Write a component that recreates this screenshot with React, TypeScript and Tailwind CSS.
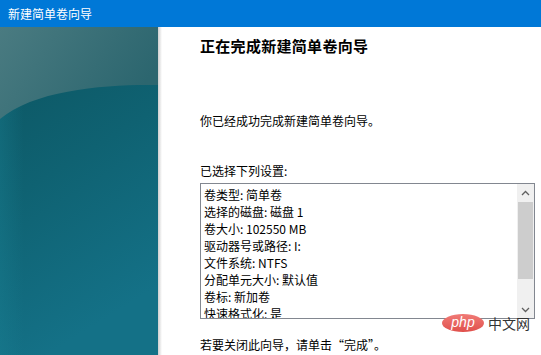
import React from 'react';

const settings = [
  '卷类型: 简单卷',
  '选择的磁盘: 磁盘 1',
  '卷大小: 102550 MB',
  '驱动器号或路径: I:',
  '文件系统: NTFS',
  '分配单元大小: 默认值',
  '卷标: 新加卷',
  '快速格式化: 是',
];

function SidePanel() {
  return (
    <svg width="158" height="328" viewBox="0 0 158 328" className="block shrink-0">
      <defs>
        <linearGradient id="deep" x1="0" y1="0" x2="0.3" y2="1">
          <stop offset="0" stopColor="#0c5460" />
          <stop offset="0.5" stopColor="#0f6272" />
          <stop offset="1" stopColor="#147187" />
        </linearGradient>
        <linearGradient id="sheen" x1="0" y1="0" x2="1" y2="0.4">
          <stop offset="0" stopColor="#4a7b81" />
          <stop offset="1" stopColor="#2c666f" />
        </linearGradient>
        <linearGradient id="edge" x1="0" y1="0" x2="1" y2="0">
          <stop offset="0" stopColor="#1a8295" stopOpacity="0.35" />
          <stop offset="0.15" stopColor="#1a8295" stopOpacity="0" />
        </linearGradient>
      </defs>
      <rect width="158" height="328" fill="url(#deep)" />
      <rect width="158" height="328" fill="url(#edge)" />
      <path d="M0 0 H158 V58 C110 57 35 62 0 92 Z" fill="url(#sheen)" />
    </svg>
  );
}

function Chevron({ up }: { up?: boolean }) {
  return (
    <svg width="9" height="6" viewBox="0 0 9 6">
      <path d={up ? 'M1 5 L4.5 1.5 L8 5' : 'M1 1 L4.5 4.5 L8 1'} fill="none" stroke="#606060" strokeWidth="1.3" />
    </svg>
  );
}

export default function App() {
  return (
    <div className="relative w-[541px] h-[355px] overflow-hidden bg-white flex flex-col font-['Noto_Sans_CJK_SC','Noto_Sans',sans-serif] text-black">
      {/* Title bar */}
      <div className="h-[27px] shrink-0 bg-[#0078d7] flex items-center pl-[8px] text-[12px] text-white">
        新建简单卷向导
      </div>

      <div className="flex flex-1 min-h-0">
        <SidePanel />
        <div className="w-[4px] shrink-0 bg-gradient-to-r from-[#cfcfcf] to-white" />

        <div className="flex flex-col pl-[38px] pt-[9px]">
          <h1 className="text-[15px] font-bold leading-[20px] tracking-[0.3px]">正在完成新建简单卷向导</h1>

          <p className="mt-[57px] text-[12px] leading-[16px]">你已经成功完成新建简单卷向导。</p>

          <p className="mt-[34px] text-[12px] leading-[16px]">已选择下列设置:</p>

          {/* Settings list */}
          <div className="mt-[4px] w-[335px] h-[136px] border border-[#828790] flex">
            <div className="flex-1 overflow-hidden pl-[3px] pt-[2px] text-[12px] leading-[17px]">
              {settings.map((s) => (
                <div key={s} className="whitespace-nowrap">{s}</div>
              ))}
            </div>
            <div className="w-[17px] shrink-0 bg-[#f0f0f0] flex flex-col">
              <div className="h-[17px] flex items-center justify-center">
                <Chevron up />
              </div>
              <div className="mt-[1px] mx-[1px] h-[77px] bg-[#cdcdcd]" />
              <div className="flex-1" />
              <div className="h-[17px] flex items-center justify-center">
                <Chevron />
              </div>
            </div>
          </div>

          <p className="mt-[18px] text-[12px] leading-[16px]">若要关闭此向导，请单击“完成”。</p>
        </div>
      </div>

      {/* watermark */}
      <div className="absolute left-[442px] top-[314px] flex items-center gap-[4px]">
        <div className="w-[42px] h-[18px] rounded-[50%] bg-gradient-to-b from-[#f07a76] to-[#e0504c] flex items-center justify-center">
          <span className="text-[14px] italic leading-none text-white font-['Liberation_Sans',sans-serif] -mt-[2px]">php</span>
        </div>
        <span className="text-[14px] leading-none text-[#333]">中文网</span>
      </div>
    </div>
  );
}
